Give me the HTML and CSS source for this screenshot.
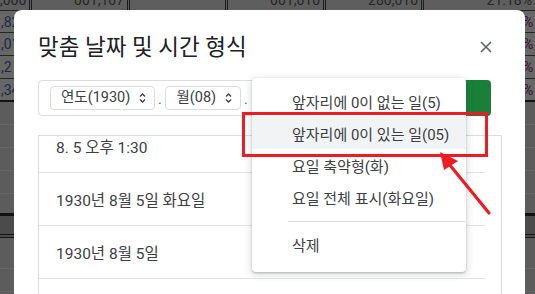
FILE: index.html
```html
<!DOCTYPE html>
<html lang="ko">

<head>
    <meta charset="UTF-8">
    <meta name="viewport" content="width=device-width, initial-scale=1.0">
    <title>맞춤 날짜 및 시간 형식</title>
    <link rel="stylesheet" href="styles.css">
</head>

<body>
    <!-- Dimmed spreadsheet behind the dialog -->
    <div class="sheet">
        <div class="row row-top">
            <div class="cell col-a"><span>,000</span></div>
            <div class="cell col-b"><span>001,107</span></div>
            <div class="cell col-c"><span></span></div>
            <div class="cell col-d"><span>001,010</span></div>
            <div class="cell col-e"><span>280,010</span></div>
            <div class="cell col-f"><span>21.18%</span></div>
        </div>
        <div class="row row-data row-first">
            <div class="cell col-a"><span>,82</span></div>
            <div class="cell col-rest"></div>
            <div class="cell col-f"><span>%</span></div>
        </div>
        <div class="row row-data">
            <div class="cell col-a"><span>,01</span></div>
            <div class="cell col-rest"></div>
            <div class="cell col-f"><span>%</span></div>
        </div>
        <div class="row row-data">
            <div class="cell col-a"><span>,2</span></div>
            <div class="cell col-rest"></div>
            <div class="cell col-f"><span>%</span></div>
        </div>
        <div class="row row-data row-last">
            <div class="cell col-a"><span>,34</span></div>
            <div class="cell col-rest"></div>
            <div class="cell col-f"><span>%</span></div>
        </div>
        <div class="row row-empty"></div>
        <div class="row row-empty"></div>
        <div class="row row-empty"></div>
        <div class="row row-empty"></div>
        <div class="row row-empty row-thick"></div>
        <div class="row row-band"></div>
        <div class="row row-empty row-tall"></div>
        <div class="row row-empty"></div>
    </div>

    <!-- Dialog -->
    <div class="dialog">
        <div class="dialog-header">
            <h2>맞춤 날짜 및 시간 형식</h2>
            <button class="close-btn" aria-label="닫기">
                <svg width="12" height="12" viewBox="0 0 12 12">
                    <path d="M1 1 L11 11 M11 1 L1 11" stroke="#5f6368" stroke-width="1.6" fill="none"/>
                </svg>
            </button>
        </div>

        <div class="format-row">
            <div class="format-input">
                <span class="chip">연도(1930)
                    <svg class="updown" width="7" height="12" viewBox="0 0 7 12">
                        <path d="M1 4.5 L3.5 2 L6 4.5 M1 7.5 L3.5 10 L6 7.5" stroke="#3c4043" stroke-width="1.4" fill="none"/>
                    </svg>
                </span>
                <span class="sep">.</span>
                <span class="chip">월(08)
                    <svg class="updown" width="7" height="12" viewBox="0 0 7 12">
                        <path d="M1 4.5 L3.5 2 L6 4.5 M1 7.5 L3.5 10 L6 7.5" stroke="#3c4043" stroke-width="1.4" fill="none"/>
                    </svg>
                </span>
                <span class="sep">.</span>
            </div>
            <button class="apply-btn" aria-label="적용"></button>
        </div>

        <div class="format-list">
            <div class="list-inner">
                <div class="list-row">8. 5 오후 1:30</div>
                <div class="list-row">1930년 8월 5일 화요일</div>
                <div class="list-row">1930년 8월 5일</div>
                <div class="list-row"></div>
            </div>
        </div>

        <!-- Day option menu -->
        <div class="menu">
            <div class="menu-item">앞자리에 0이 없는 일(5)</div>
            <div class="menu-item active">앞자리에 0이 있는 일(05)</div>
            <div class="menu-item">요일 축약형(화)</div>
            <div class="menu-item">요일 전체 표시(화요일)</div>
            <div class="menu-divider"></div>
            <div class="menu-item">삭제</div>
        </div>

        <!-- Annotation box -->
        <div class="highlight-box"></div>
    </div>

    <!-- Annotation arrow -->
    <svg class="arrow" width="70" height="75" viewBox="0 0 70 75">
        <line x1="59" y1="68" x2="19" y2="19" stroke="#ed1c24" stroke-width="3.2" stroke-linecap="round"/>
        <polygon points="10,7 14,25 28,16" fill="#ed1c24"/>
    </svg>
</body>

</html>
```

FILE: styles.css
```css
/* Variables */
:root {
    --text-color: #3c4043;
    --title-color: #202124;
    --line-color: #dadce0;
    --sheet-bg: #5c5c5c;
    --annot-red: #ed1c24;
    --green: #188038;
}

/* Global Styles */
body {
    margin: 0;
    width: 535px;
    height: 294px;
    overflow: hidden;
    background: var(--sheet-bg);
    font-family: Roboto, "Noto Sans CJK KR", sans-serif;
    position: relative;
}

/* Spreadsheet background */
.sheet {
    display: flex;
    flex-direction: column;
}

.row {
    display: flex;
    box-sizing: border-box;
}

.row-top {
    height: 10px;
    overflow: hidden;
    background: #5e5e5e;
}

.row-top .cell {
    display: flex;
    align-items: flex-end;
    justify-content: flex-end;
    border-right: 3px double #1b1b1b;
    font-size: 14px;
    color: #262626;
}

.row-top .cell span {
    line-height: 20px;
    padding-right: 3px;
}

.col-a { width: 32px; box-sizing: border-box; }
.col-b { width: 98px; box-sizing: border-box; }
.col-c { width: 98px; box-sizing: border-box; }
.col-d { width: 98px; box-sizing: border-box; }
.col-e { width: 98px; box-sizing: border-box; }
.col-f { flex: 1; }
.col-rest { width: 488px; }

.row-top .col-a { justify-content: flex-start; }
.row-top .col-f { border-right: none; }

.row-data {
    height: 23px;
    background: #676767;
    border-bottom: 1px solid #262626;
    font-size: 14px;
}

.row-first {
    border-top: 1px solid #262626;
}

.row-last {
    border-bottom: 2px solid #141414;
}

.row-data .cell {
    display: flex;
    align-items: center;
}

.row-data .col-a span {
    color: #1c2a45;
    padding-left: 1px;
}

.row-data .col-f span {
    color: #3a1030;
    padding-left: 3px;
}

.row-empty {
    height: 23px;
    border-bottom: 1px solid #666;
}

.row-thick {
    height: 22px;
    border-bottom: 3px solid #121212;
}

.row-band {
    height: 22px;
    background: #4b4b4b;
    border-bottom: 4px double #151515;
}

.row-tall {
    height: 31px;
}

/* Dialog */
.dialog {
    position: absolute;
    left: 14px;
    top: 10px;
    width: 511px;
    height: 310px;
    box-sizing: border-box;
    background: #fff;
    border-radius: 8px;
    padding: 22px 23px 0 24px;
}

.dialog-header {
    display: flex;
    justify-content: space-between;
    align-items: center;
    height: 30px;
}

h2 {
    margin: 0;
    font-size: 22.5px;
    font-weight: 400;
    line-height: 30px;
    color: var(--title-color);
}

.close-btn {
    width: 30px;
    height: 30px;
    border: none;
    background: none;
    padding: 0;
    display: flex;
    align-items: center;
    justify-content: center;
    margin-right: 1px;
}

.format-row {
    display: flex;
    gap: 8px;
    margin-top: 18px;
    margin-right: 11px;
    height: 36px;
}

.format-input {
    flex: 1;
    box-sizing: border-box;
    border: 1px solid var(--line-color);
    border-radius: 4px;
    display: flex;
    align-items: center;
    padding: 0 11px;
}

.chip {
    display: flex;
    align-items: center;
    gap: 9px;
    height: 24px;
    box-sizing: border-box;
    border: 1px solid var(--line-color);
    border-radius: 4px;
    padding: 0 8px 0 10px;
    font-size: 14.5px;
    color: var(--text-color);
    line-height: 22px;
}

.sep {
    font-size: 12px;
    color: var(--text-color);
    margin: 0 4px 0 3px;
    padding-top: 4px;
}

.apply-btn {
    width: 84px;
    border: none;
    border-radius: 4px;
    background: var(--green);
}

/* Format list */
.format-list {
    margin-top: 19px;
    height: 200px;
    border: 1px solid var(--line-color);
    overflow: hidden;
}

.list-inner {
    margin-top: -16px;
    margin-right: 16px;
}

.list-row {
    height: 53px;
    box-sizing: border-box;
    border-bottom: 1px solid #e3e3e3;
    display: flex;
    align-items: center;
    padding-left: 17px;
    font-size: 15.5px;
    color: var(--text-color);
}

/* Menu overlay */
.menu {
    position: absolute;
    left: 238px;
    top: 68px;
    width: 214px;
    box-sizing: border-box;
    background: #fff;
    border-radius: 4px;
    padding: 7px 0 12px;
    box-shadow: 0 1px 2px rgba(60, 64, 67, 0.3), 0 2px 6px 2px rgba(60, 64, 67, 0.15);
}

.menu-item {
    height: 32px;
    display: flex;
    align-items: center;
    padding-left: 40px;
    font-size: 15px;
    color: var(--text-color);
}

.menu-item.active {
    background: #f1f3f4;
}

.menu-divider {
    height: 1px;
    background: var(--line-color);
    margin: 8px 1px 6px 36px;
}

/* Annotations */
.highlight-box {
    position: absolute;
    left: 228px;
    top: 102px;
    width: 246px;
    height: 45px;
    box-sizing: border-box;
    border: 3px solid var(--annot-red);
}

.arrow {
    position: absolute;
    left: 430px;
    top: 145px;
}
```
